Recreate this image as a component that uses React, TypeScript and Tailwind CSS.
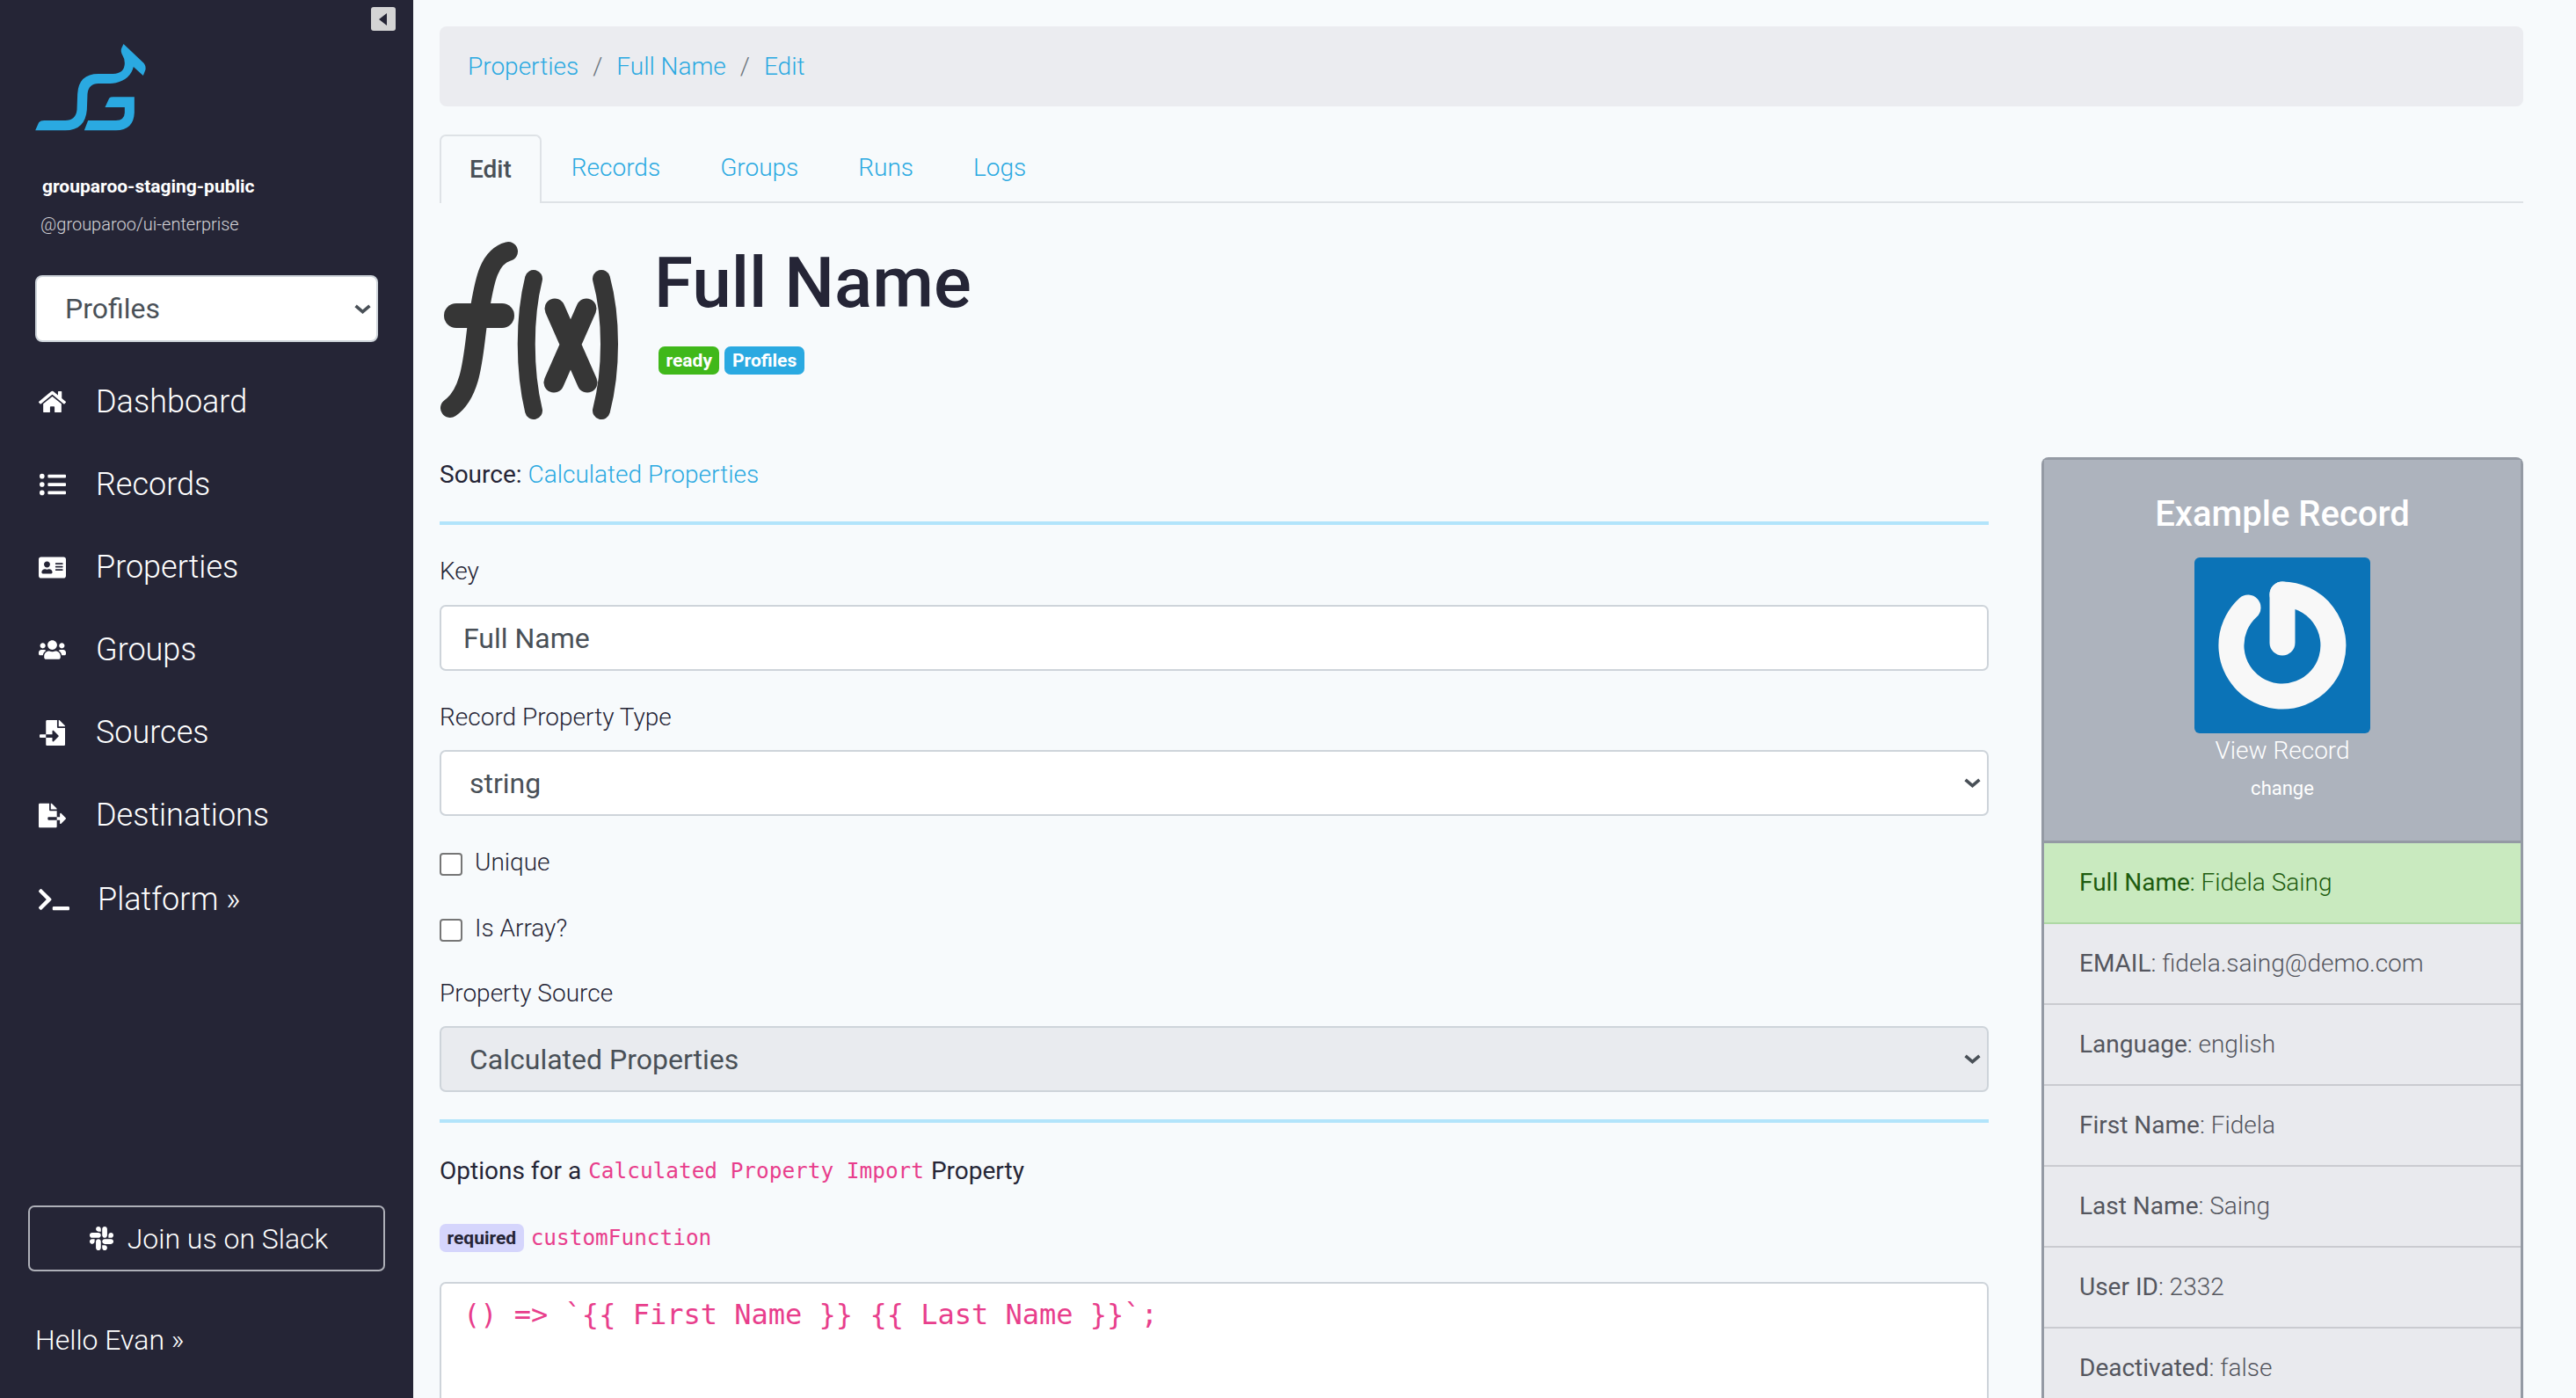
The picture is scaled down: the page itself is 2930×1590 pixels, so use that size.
import {
  FaAddressCard,
  FaFileExport,
  FaFileImport,
  FaHome,
  FaListUl,
  FaSlack,
  FaTerminal,
  FaUsers,
} from "react-icons/fa"

const navItems = [
  { label: "Dashboard", icon: <FaHome className="w-[31px] h-[28px]" /> },
  { label: "Records", icon: <FaListUl className="w-[30px] h-[30px]" /> },
  { label: "Properties", icon: <FaAddressCard className="w-[31px] h-[31px]" /> },
  { label: "Groups", icon: <FaUsers className="w-[34px] h-[30px]" /> },
  { label: "Sources", icon: <FaFileImport className="w-[29px] h-[29px]" /> },
  { label: "Destinations", icon: <FaFileExport className="w-[31px] h-[29px]" /> },
]

const recordRows = [
  { key: "EMAIL", value: "fidela.saing@demo.com" },
  { key: "Language", value: "english" },
  { key: "First Name", value: "Fidela" },
  { key: "Last Name", value: "Saing" },
  { key: "User ID", value: "2332" },
  { key: "Deactivated", value: "false" },
]

function Logo() {
  return (
    <svg viewBox="120 150 380 300" className="w-[127px] h-[100px]" fill="#2aa9e1">
      <path d="M120 445 L132 418 Q138 411 150 411 L222 411 Q258 411 262 375 L264 320 Q268 252 335 252 L385 252 Q425 250 425 215 Q425 200 418 190 Q410 175 414 165 L421 150 L490 215 Q498 225 496 238 L488 258 L455 228 Q445 270 395 283 Q385 285 375 285 L335 285 Q302 285 298 320 L296 375 Q290 445 222 445 Z" />
      <path d="M287 445 L300 411 L395 411 Q424 411 425 385 L425 366 L358 366 L372 335 Q376 331 385 331 L458 331 L458 385 Q455 445 395 445 Z" />
    </svg>
  )
}

function FxIcon() {
  return (
    <svg viewBox="0 0 206 206" className="w-[206px] h-[206px] shrink-0" fill="none" stroke="#363636" strokeLinecap="round">
      <path d="M78 15 C52 22 50 60 44 90 C38 130 38 175 12 193" strokeWidth="22" />
      <path d="M19 88 H71" strokeWidth="28" />
      <path d="M107 46 C96 90 96 150 107 196" strokeWidth="20" />
      <path d="M131 80 L168 164 M167 80 L130 164" strokeWidth="23" />
      <path d="M184 46 C196 90 196 150 184 196" strokeWidth="20" />
    </svg>
  )
}

function Chevron({ className }: { className: string }) {
  return (
    <svg viewBox="0 0 18 12" className={className} fill="none" stroke="#495057" strokeWidth="3.4">
      <path d="M1.5 2.5 L9 9 L16.5 2.5" />
    </svg>
  )
}

function SelectBox({ value, disabled }: { value: string; disabled?: boolean }) {
  return (
    <div className="relative">
      <select
        defaultValue={value}
        className={`block w-full h-[75px] appearance-none rounded-[7px] border-[2px] border-[#ced4da] pl-[32px] text-[32px] font-normal text-[#495057] ${disabled ? "bg-[#e9ebef]" : "bg-white"}`}
      >
        <option>{value}</option>
      </select>
      <Chevron className="absolute right-[9px] top-[31px] w-[19px] h-[13px]" />
    </div>
  )
}

function Checkbox({ label, className }: { label: string; className: string }) {
  return (
    <label className={`flex items-center h-[36px] ${className}`}>
      <span className="w-[26px] h-[26px] mt-[3px] rounded-[4px] border-[2px] border-[#767676] bg-white" />
      <span className="ml-[14px]">{label}</span>
    </label>
  )
}

export default function App() {
  return (
    <div className="flex h-[1590px] overflow-hidden bg-[#f7fafc] text-[#252536] font-['Roboto',sans-serif] text-[28px] font-light leading-[36px]">
      <aside className="relative flex flex-col w-[470px] shrink-0 bg-[#252536] text-white">
        <button className="absolute right-[20px] top-[8px] flex items-center justify-center w-[28px] h-[27px] rounded-[3px] bg-[#d4d4d4]">
          <span className="w-0 h-0 border-y-[7px] border-y-transparent border-r-[9px] border-r-[#252536] mr-[2px]" />
        </button>

        <div className="mt-[50px] ml-[40px]">
          <Logo />
        </div>
        <div className="mt-[47px] ml-[48px] text-[21px] leading-[30px] font-bold">
          grouparoo-staging-public
        </div>
        <div className="mt-[13px] ml-[46px] text-[20px] leading-[30px] text-[#d4d4d8]">
          @grouparoo/ui-enterprise
        </div>

        <div className="relative mt-[43px] mx-[40px]">
          <select
            defaultValue="Profiles"
            className="block w-full h-[76px] appearance-none rounded-[8px] border-[2px] border-[#ced4da] bg-white pl-[32px] text-[32px] font-normal text-[#495057]"
          >
            <option>Profiles</option>
          </select>
          <Chevron className="absolute right-[8px] top-[32px] w-[19px] h-[13px]" />
        </div>

        <nav className="mt-[21px] text-[36px] leading-[94px]">
          {navItems.map((item) => (
            <div key={item.label} className="flex items-center h-[94px] pl-[44px]">
              <span className="flex items-center justify-center w-[31px]">{item.icon}</span>
              <span className="ml-[34px]">{item.label}</span>
            </div>
          ))}
          <div className="flex items-center h-[96px] pl-[44px] pt-[2px]">
            <FaTerminal className="w-[35px] h-[30px]" />
            <span className="ml-[32px]">Platform »</span>
          </div>
        </nav>

        <div className="mt-auto mx-[32px] mb-[44px]">
          <button className="flex items-center justify-center w-full h-[75px] pl-[3px] rounded-[7px] border-[2px] border-[#aeb0b8] text-[32px] font-light">
            <FaSlack className="w-[31px] h-[31px] mr-[14px]" />
            Join us on Slack
          </button>
          <div className="mt-[56px] ml-[8px] text-[32px] leading-[44px]">Hello Evan »</div>
        </div>
      </aside>

      <main className="flex-1 min-w-0 pl-[30px] pr-[60px] pt-[30px]">
        <div className="flex items-center h-[91px] rounded-[8px] bg-[#ebecf0] px-[32px]">
          <a className="text-[#2aa9e1]">Properties</a>
          <span className="mx-[16px] text-[#6c757d]">/</span>
          <a className="text-[#2aa9e1]">Full Name</a>
          <span className="mx-[16px] text-[#6c757d]">/</span>
          <a className="text-[#2aa9e1]">Edit</a>
        </div>

        <div className="flex mt-[32px] h-[78px] border-b-[2px] border-[#dee2e6]">
          <div className="flex items-center h-[78px] px-[32px] rounded-t-[7px] border-[2px] border-b-0 border-[#dee2e6] bg-[#f7fafc] font-medium text-[#495057]">
            Edit
          </div>
          {["Records", "Groups", "Runs", "Logs"].map((tab) => (
            <div key={tab} className="flex items-center px-[34px] h-[76px] text-[#2aa9e1]">
              {tab}
            </div>
          ))}
        </div>

        <div className="flex mt-[40px] h-[249px]">
          <FxIcon />
          <div className="ml-[38px]">
            <h1 className="mt-[6px] text-[80px] leading-[90px] font-medium">Full Name</h1>
            <div className="flex gap-[6px] mt-[27px] ml-[5px] text-[21px] leading-[32px] font-bold text-white">
              <span className="px-[8.5px] rounded-[7px] bg-[#40b81a]">ready</span>
              <span className="px-[8.5px] rounded-[7px] bg-[#2aa9e1]">Profiles</span>
            </div>
          </div>
        </div>

        <div className="flex gap-[60px]">
          <div className="w-[1762px] shrink-0">
            <div className="mt-[2px]">
              <span className="font-normal">Source: </span>
              <a className="text-[#2aa9e1]">Calculated Properties</a>
            </div>
            <hr className="mt-[35px] h-[4px] border-0 bg-[#b2e4fb]" />

            <div className="mt-[35px]">Key</div>
            <input
              readOnly
              value="Full Name"
              className="block mt-[20px] w-full h-[75px] rounded-[7px] border-[2px] border-[#ced4da] bg-white px-[25px] text-[32px] font-normal text-[#495057]"
            />

            <div className="mt-[35px] mb-[19px]">Record Property Type</div>
            <SelectBox value="string" />

            <Checkbox label="Unique" className="mt-[35px]" />
            <Checkbox label="Is Array?" className="mt-[39px]" />

            <div className="mt-[38px] mb-[19px]">Property Source</div>
            <SelectBox value="Calculated Properties" disabled />

            <hr className="mt-[31px] h-[4px] border-0 bg-[#b2e4fb]" />

            <div className="mt-[37px] flex items-center font-normal">
              Options for a
              <code className="mx-[8px] text-[#e83e8c] font-['DejaVu_Sans_Mono',monospace] text-[24.4px]">
                Calculated Property Import
              </code>
              Property
            </div>

            <div className="mt-[40px] flex items-center h-[36px]">
              <span className="flex items-center h-[32px] px-[8.5px] rounded-[7px] bg-[#d5d5fc] text-[21px] font-bold">
                required
              </span>
              <code className="ml-[8px] text-[#e83e8c] font-['DejaVu_Sans_Mono',monospace] text-[24.4px]">
                customFunction
              </code>
            </div>

            <div className="mt-[32px] h-[300px] rounded-[7px] border-[2px] border-[#ced4da] bg-white pl-[25px] pt-[17px] text-[#e83e8c] font-['DejaVu_Sans_Mono',monospace] text-[32px] font-normal">
              {"() => `{{ First Name }} {{ Last Name }}`;"}
            </div>
          </div>

          <div className="flex-1 min-w-0 h-[1200px] rounded-t-[8px] border-x-[3px] border-t-[3px] border-[#949aa4]">
            <div className="flex flex-col items-center h-[436px] bg-[#adb3bd] text-white border-b-[3px] border-[#949aa4]">
              <h3 className="mt-[39px] text-[40px] leading-[46px] font-medium">Example Record</h3>
              <div className="mt-[26px] flex items-center justify-center w-[200px] h-[200px] rounded-[6px] bg-[#0b73b7]">
                <svg viewBox="0 0 200 200" className="w-[200px] h-[200px]" fill="none" stroke="#f8f8f8" strokeWidth="29" strokeLinecap="round">
                  <path d="M61 57 A58 58 0 1 0 100 42" />
                  <path d="M100 42 V97" />
                </svg>
              </div>
              <div className="mt-[2px]">View Record</div>
              <div className="mt-[10px] text-[22px] leading-[30px] font-normal">change</div>
            </div>
            <div className="flex items-center h-[92px] pl-[40px] bg-[#c9eabf] border-b-[2px] border-[#aed8a4] text-[#1e5c0f]">
              <span className="font-normal whitespace-pre">Full Name</span>
              <span className="whitespace-pre">: Fidela Saing</span>
            </div>
            {recordRows.map((row) => (
              <div key={row.key} className="flex items-center h-[92px] pl-[40px] bg-[#e9eaee] border-b-[2px] border-[#cacbd0] text-[#54565e]">
                <span className="font-normal whitespace-pre">{row.key}</span>
                <span className="whitespace-pre">: {row.value}</span>
              </div>
            ))}
          </div>
        </div>
      </main>
    </div>
  )
}
